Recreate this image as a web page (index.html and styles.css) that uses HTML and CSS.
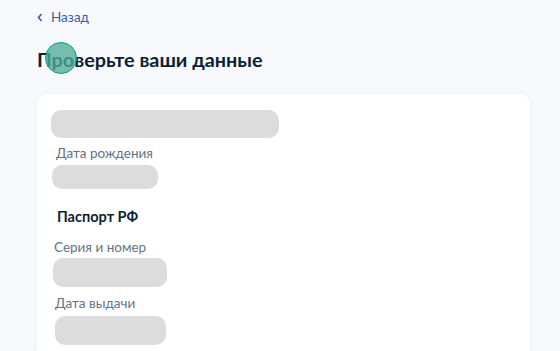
FILE: index.html
```html
<!DOCTYPE html>
<html lang="ru">
<head>
<meta charset="utf-8">
<link rel="stylesheet" href="styles.css">
</head>
<body>
<div class="page">
  <a class="back" href="#"><svg class="chev" width="6" height="9" viewBox="0 0 6 9"><path d="M4.5 1 L1.5 4.5 L4.5 8" fill="none" stroke="#3a5ca8" stroke-width="1.6"/></svg><span>Назад</span></a>
  <div class="title-wrap">
    <h1 class="title">Проверьте ваши данные</h1>
    <div class="touch"></div>
  </div>
  <div class="card">
    <div class="sk sk-name"></div>
    <div class="label l-birth">Дата рождения</div>
    <div class="sk sk-birth"></div>
    <div class="section">Паспорт РФ</div>
    <div class="label l-series">Серия и номер</div>
    <div class="sk sk-series"></div>
    <div class="label l-issue">Дата выдачи</div>
    <div class="sk sk-issue"></div>
  </div>
</div>
</body>
</html>
```

FILE: styles.css
```css
html, body {
  margin: 0;
  padding: 0;
  background: #f8f9fc;
  font-family: Lato, "Noto Sans", sans-serif;
  overflow: hidden;
}
.page {
  box-sizing: border-box;
  height: 100vh;
  padding: 9px 30px 0 37px;
  display: flex;
  flex-direction: column;
}
.back {
  display: flex;
  align-items: center;
  gap: 8px;
  color: #3a5ca8;
  text-decoration: none;
  font-size: 13.5px;
  line-height: 16px;
}
.chev { display: block; }
.title-wrap {
  position: relative;
  margin-top: 21px;
}
.title {
  margin: 0;
  font-size: 19.8px;
  line-height: 26px;
  font-weight: 700;
  color: #0b1f33;
}
.touch {
  position: absolute;
  left: 8px;
  top: -4px;
  width: 30px;
  height: 30px;
  border-radius: 50%;
  background: rgba(78, 172, 152, 0.78);
  border: 1.5px solid #149a82;
}
.card {
  flex: 1;
  min-height: 0;
  margin-top: 22px;
  background: #fff;
  border-radius: 10px 10px 0 0;
  box-shadow: 0 1px 6px rgba(100, 120, 160, 0.08);
  padding: 16px 14px 0;
  display: flex;
  flex-direction: column;
  align-items: flex-start;
  overflow: hidden;
}
.sk {
  flex: none;
  background: #dcdcdc;
  border-radius: 10px;
}
.sk-name { width: 228px; height: 28px; }
.label {
  color: #66727f;
  font-size: 13.5px;
  line-height: 16px;
}
.l-birth { margin: 7px 0 0 5px; }
.sk-birth { width: 106px; height: 24px; margin: 4px 0 0 1px; }
.section {
  margin: 19px 0 0 6px;
  font-size: 14.5px;
  line-height: 18px;
  font-weight: 700;
  color: #0b1f33;
}
.l-series { margin: 13px 0 0 3px; }
.sk-series { width: 114px; height: 29px; margin: 3px 0 0 2px; }
.l-issue { margin: 8px 0 0 4px; }
.sk-issue { width: 111px; height: 29px; margin: 5px 0 0 4px; }
```
